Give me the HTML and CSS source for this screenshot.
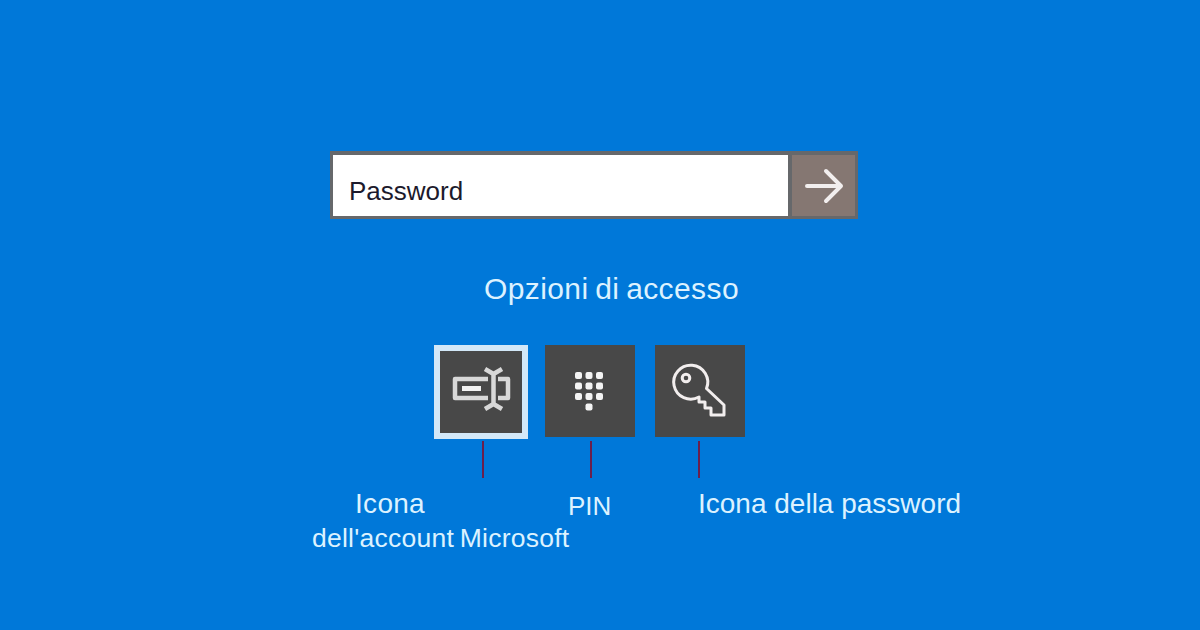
FILE: index.html
```html
<!DOCTYPE html>
<html lang="it">
<head>
    <meta charset="UTF-8">
    <meta name="viewport" content="width=device-width, initial-scale=1.0">
    <title>Opzioni di accesso</title>
    <link rel="stylesheet" href="styles.css">
</head>
<body>

    <form class="login">
        <div class="field">Password</div>
        <button class="submit" type="button" aria-label="Accedi">
            <svg width="40" height="38" viewBox="0 0 40 38">
                <path d="M3 19H37M22 4L37 19L22 34"/>
            </svg>
        </button>
    </form>

    <h1 class="title">Opzioni di accesso</h1>

    <div class="tiles">
        <div class="tile selected">
            <svg width="94" height="94" viewBox="0 0 94 94">
                <path class="thick" d="M54 34H21V53H54M64 34H74V53H64"/>
                <path class="bar" d="M28 43.500H47"/>
                <path class="thick" d="M51 24L59.500 29L68 24M59.500 28V60M51 64L59.500 59L68 64"/>
            </svg>
        </div>
        <div class="tile">
            <svg class="dots" width="90" height="92" viewBox="0 0 90 92">
                <rect x="30" y="27" width="7" height="7" rx="2"/>
                <rect x="40.500" y="27" width="7" height="7" rx="2"/>
                <rect x="51" y="27" width="7" height="7" rx="2"/>
                <rect x="30" y="37.500" width="7" height="7" rx="2"/>
                <rect x="40.500" y="37.500" width="7" height="7" rx="2"/>
                <rect x="51" y="37.500" width="7" height="7" rx="2"/>
                <rect x="30" y="48" width="7" height="7" rx="2"/>
                <rect x="40.500" y="48" width="7" height="7" rx="2"/>
                <rect x="51" y="48" width="7" height="7" rx="2"/>
                <rect x="40.500" y="58.500" width="7" height="7" rx="2"/>
            </svg>
        </div>
        <div class="tile">
            <svg width="90" height="92" viewBox="0 0 90 92">
                <path d="M51.500 43.500A17 17 0 1 0 44 52V57H50V63H56V70H69V60Z"/>
                <circle cx="31" cy="33" r="3.800"/>
            </svg>
        </div>
    </div>

    <div class="lines">
        <span class="line"></span>
        <span class="line"></span>
        <span class="line"></span>
    </div>

    <div class="labels">
        <div class="label account"><span class="first">Icona</span><span class="second">dell'account Microsoft</span></div>
        <div class="label pin">PIN</div>
        <div class="label">Icona della password</div>
    </div>

</body>
</html>
```
FILE: styles.css
```css
* {
    box-sizing: border-box;
}

body {
    margin: 0;
    height: 630px;
    padding-top: 151px;
    overflow: hidden;
    background-color: #0078d9;
    color: #dcf2ff;
    font-family: "Liberation Sans", Arial, sans-serif;
}

.login {
    display: flex;
    width: 528px;
    height: 68px;
    margin: 0 0 0 330px;
    border: 3px solid #66686b;
    border-top-width: 4px;
}

.field {
    flex: 1;
    padding: 19px 0 0 16px;
    background-color: white;
    color: #1c1a2c;
    font-size: 26px;
    line-height: 34px;
}

.submit {
    display: flex;
    align-items: center;
    justify-content: center;
    width: 67px;
    padding: 0;
    border: 0;
    border-left: 4px solid #66686b;
    background-color: #857772;
}

svg {
    display: block;
    fill: none;
    stroke: #f2eeee;
    stroke-width: 3;
    stroke-linejoin: round;
}

.submit svg {
    stroke-width: 4;
    stroke-linecap: round;
}

.title {
    margin: 51px 0 0 484px;
    font-size: 30px;
    font-weight: 400;
    line-height: 38px;
    letter-spacing: 0.4px;
    word-spacing: -2px;
}

.tiles {
    display: flex;
    height: 94px;
    margin: 37px 0 0 434px;
}

.tile {
    width: 90px;
    height: 92px;
    margin-right: 20px;
    background-color: #484848;
}

.selected {
    width: 94px;
    height: 94px;
    margin-right: 17px;
    box-shadow: inset 0 0 0 6px #d3e8f8;
}

.thick {
    stroke: #d8d8d8;
    stroke-width: 4.5;
}

.bar {
    stroke: #f2f2f2;
    stroke-width: 5;
}

.dots {
    fill: #f4f4f4;
    stroke: none;
}

.lines {
    display: flex;
    gap: 106px;
    margin: 2px 0 0 482px;
}

.line {
    width: 2px;
    height: 37px;
    background-color: #6b1f4c;
}

.labels {
    display: flex;
    margin: 9px 0 0 312px;
    font-size: 28px;
    line-height: 34px;
}

.account {
    width: 256px;
}

.label span {
    display: block;
    white-space: nowrap;
}

.first {
    padding-left: 43px;
    letter-spacing: 0.3px;
}

.second {
    font-size: 26.5px;
    letter-spacing: 0.25px;
    word-spacing: -2px;
}

.pin {
    width: 130px;
    padding-top: 2px;
    font-size: 26px;
}
```
